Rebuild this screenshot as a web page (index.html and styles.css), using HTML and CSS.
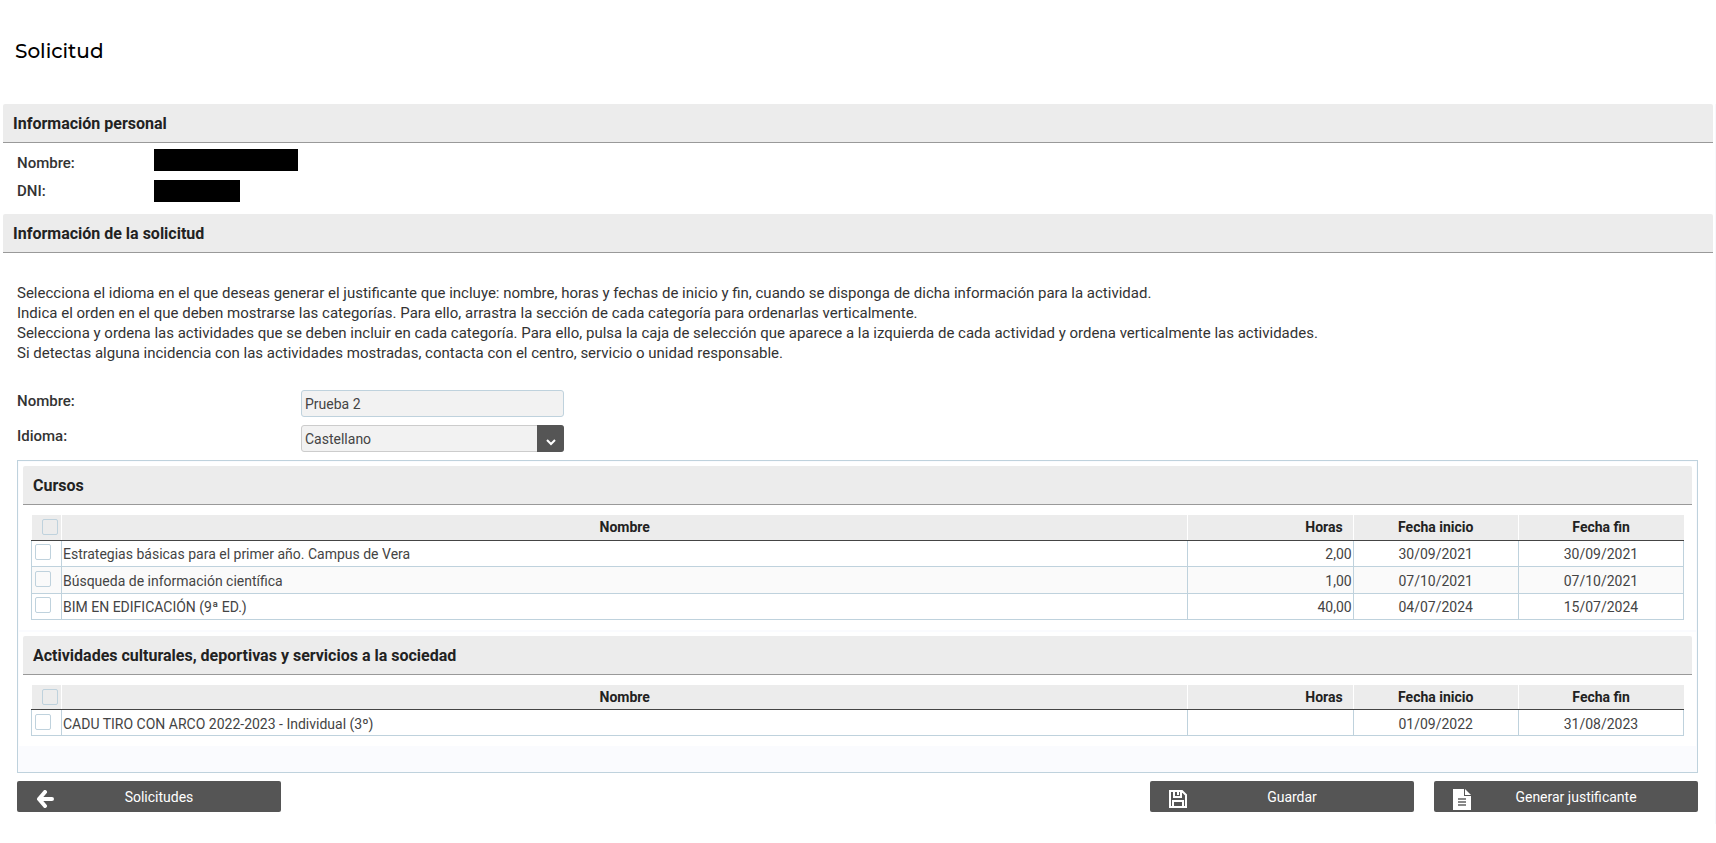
FILE: index.html
```html
<!DOCTYPE html>
<html lang="es">

<head>
  <meta charset="UTF-8">
  <title>Solicitud</title>
  <meta name="viewport" content="width=device-width, initial-scale=1.0">
  <link rel="stylesheet" href="styles.css">
</head>

<body>
  <h1>Solicitud</h1>

  <main class="page">
    <h2 class="section-title">Información personal</h2>
    <dl class="personal">
      <dt>Nombre:</dt>
      <dd><span class="redacted redacted-name"></span></dd>
      <dt>DNI:</dt>
      <dd><span class="redacted redacted-dni"></span></dd>
    </dl>

    <h2 class="section-title">Información de la solicitud</h2>
    <form class="request">
      <p class="help">
        Selecciona el idioma en el que deseas generar el justificante que incluye: nombre, horas y fechas de inicio y fin, cuando se disponga de dicha información para la actividad.<br>
        Indica el orden en el que deben mostrarse las categorías. Para ello, arrastra la sección de cada categoría para ordenarlas verticalmente.<br>
        Selecciona y ordena las actividades que se deben incluir en cada categoría. Para ello, pulsa la caja de selección que aparece a la izquierda de cada actividad y ordena verticalmente las actividades.<br>
        Si detectas alguna incidencia con las actividades mostradas, contacta con el centro, servicio o unidad responsable.
      </p>

      <div class="fields">
        <div class="field">
          <label for="nombre">Nombre:</label>
          <input type="text" id="nombre" value="Prueba 2">
        </div>
        <div class="field">
          <label for="idioma">Idioma:</label>
          <div class="select">
            <select id="idioma">
              <option>Castellano</option>
              <option>Valenciano</option>
              <option>Inglés</option>
            </select>
            <span class="select-arrow">
              <svg width="10" height="7" viewBox="0 0 10 7"><path d="M1 1l4 4 4-4" fill="none" stroke="#fff" stroke-width="2"/></svg>
            </span>
          </div>
        </div>
      </div>

      <!-- Categories -->
      <div class="categories">
        <section class="category">
          <h3 class="section-title">Cursos</h3>
          <table>
            <thead>
              <tr>
                <th class="col-check"><input type="checkbox" aria-label="Seleccionar todos los cursos"></th>
                <th>Nombre</th>
                <th class="col-hours">Horas</th>
                <th class="col-date">Fecha inicio</th>
                <th class="col-date">Fecha fin</th>
              </tr>
            </thead>
            <tbody>
              <tr>
                <td class="col-check"><input type="checkbox" id="curso-1"></td>
                <td><label for="curso-1">Estrategias básicas para el primer año. Campus de Vera</label></td>
                <td class="col-hours">2,00</td>
                <td class="col-date">30/09/2021</td>
                <td class="col-date">30/09/2021</td>
              </tr>
              <tr>
                <td class="col-check"><input type="checkbox" id="curso-2"></td>
                <td><label for="curso-2">Búsqueda de información científica</label></td>
                <td class="col-hours">1,00</td>
                <td class="col-date">07/10/2021</td>
                <td class="col-date">07/10/2021</td>
              </tr>
              <tr>
                <td class="col-check"><input type="checkbox" id="curso-3"></td>
                <td><label for="curso-3">BIM EN EDIFICACIÓN (9ª ED.)</label></td>
                <td class="col-hours">40,00</td>
                <td class="col-date">04/07/2024</td>
                <td class="col-date">15/07/2024</td>
              </tr>
            </tbody>
          </table>
        </section>

        <section class="category">
          <h3 class="section-title">Actividades culturales, deportivas y servicios a la sociedad</h3>
          <table>
            <thead>
              <tr>
                <th class="col-check"><input type="checkbox" aria-label="Seleccionar todas las actividades"></th>
                <th>Nombre</th>
                <th class="col-hours">Horas</th>
                <th class="col-date">Fecha inicio</th>
                <th class="col-date">Fecha fin</th>
              </tr>
            </thead>
            <tbody>
              <tr>
                <td class="col-check"><input type="checkbox" id="actividad-1"></td>
                <td><label for="actividad-1">CADU TIRO CON ARCO 2022-2023 - Individual (3º)</label></td>
                <td class="col-hours"></td>
                <td class="col-date">01/09/2022</td>
                <td class="col-date">31/08/2023</td>
              </tr>
            </tbody>
          </table>
        </section>
      </div>

      <!-- Buttons -->
      <div class="actions">
        <button type="button" class="back">
          <svg width="18" height="18" viewBox="0 0 18 18"><path d="M9 2L3 9l6 7M3 9h13" fill="none" stroke="#fff" stroke-width="4" stroke-linejoin="round" stroke-linecap="round"/></svg>
          <span>Solicitudes</span>
        </button>
        <button type="submit">
          <svg width="18" height="18" viewBox="0 0 18 18" fill="none" stroke="#fff" stroke-width="2"><path d="M1 1h12l4 4v12H1zM4 17v-6h10v6M5 1v6h7V1"/><path d="M9 2v3"/></svg>
          <span>Guardar</span>
        </button>
        <button type="button">
          <svg width="18" height="21" viewBox="0 0 18 21"><path d="M0 0h11v7h7v14H0z" fill="#fff"/><path d="M12 0l6 6h-6z" fill="#fff"/><path d="M5 10h8M5 13h8M5 16h8" stroke="#888" stroke-width="2"/></svg>
          <span>Generar justificante</span>
        </button>
      </div>
    </form>
  </main>
</body>

</html>
```
FILE: styles.css
```css
/* General Styles */
* {
  box-sizing: border-box;
}

body {
  margin: 0;
  background-color: #fff;
  color: #333;
  font-family: Roboto, Arial, sans-serif;
  font-size: 15px;
  line-height: 20px;
}

.page {
  padding: 0 2px 12px 3px;
  border-right: 1px solid #f7f8fc;
}

h1 {
  margin: 0;
  padding: 36px 15px 38px;
  color: #000;
  font-family: Montserrat, Inter, sans-serif;
  font-size: 20px;
  font-weight: 500;
  line-height: 30px;
}

.section-title {
  margin: 0;
  padding: 10px 10px 8px;
  border-bottom: 1px solid #999;
  border-radius: 2px 2px 0 0;
  background-color: #ececec;
  color: #222;
  font-size: 16px;
  font-weight: 700;
  line-height: 20px;
}

/* Personal data */
.personal {
  display: grid;
  grid-template-columns: 137px 1fr;
  grid-auto-rows: 28px;
  align-items: center;
  margin: 0;
  padding: 6px 14px 9px;
}

.personal dt {
  font-weight: 500;
}

.personal dd {
  display: flex;
  align-items: center;
  height: 28px;
  margin: 0;
}

.redacted {
  height: 22px;
  background-color: #000;
}

.redacted-name {
  align-self: flex-start;
  width: 144px;
}

.redacted-dni {
  width: 86px;
}

/* Request form */
.request {
  padding: 30px 15px 0 14px;
}

.help {
  margin: 0 0 27px;
}

.fields {
  display: flex;
  flex-direction: column;
  gap: 8px;
  margin-bottom: 8px;
}

.field {
  display: grid;
  grid-template-columns: 284px 263px;
}

.field label {
  padding-top: 1px;
  font-weight: 500;
}

.field input,
.field select {
  width: 100%;
  height: 27px;
  padding: 0 3px;
  border: 1px solid #bfd2dd;
  border-radius: 3px;
  background-color: #f2f2f2;
  color: #444;
  font-family: inherit;
  font-size: 14px;
}

.field select {
  appearance: none;
  border-color: #ccc;
}

.select {
  position: relative;
}

.select-arrow {
  position: absolute;
  top: 0;
  right: 0;
  display: flex;
  align-items: center;
  justify-content: center;
  width: 27px;
  height: 27px;
  padding-top: 8px;
  border-radius: 0 3px 3px 0;
  background-color: #555;
  pointer-events: none;
}

/* Categories */
.categories {
  display: flex;
  flex-direction: column;
  gap: 2px;
  padding: 1px 1px 26px;
  border: 1px solid #bfd2dd;
  background-color: #fafbfe;
}

.category {
  padding: 4px 4px 10px;
  background-color: #fff;
}

table {
  width: calc(100% - 16px);
  margin: 10px 8px 0;
  border-collapse: collapse;
  table-layout: fixed;
  color: #444;
  font-size: 14px;
}

th {
  height: 25px;
  padding: 0;
  border-right: 1px solid #fff;
  border-bottom: 1px solid #444;
  background-color: #ececec;
  color: #222;
  font-weight: 700;
}

th:last-child {
  border-right: none;
}

td {
  height: 26px;
  padding: 2px 1px 0;
  border: 1px solid #bfd2dd;
}

thead + tbody tr:first-child td {
  border-top-color: #444;
}

tbody tr:nth-child(even) {
  background-color: #fafafa;
}

tbody tr:nth-child(even) td {
  height: 27px;
}

.col-check {
  width: 30px;
  line-height: 0;
  text-align: left;
}

.col-check input {
  appearance: none;
  width: 16px;
  height: 16px;
  margin: 0 0 4px 2px;
  border: 1px solid #bfd2dd;
  border-radius: 2px;
  vertical-align: middle;
}

th.col-check input {
  margin: 0 0 0 10px;
}

.col-hours {
  width: 10%;
  text-align: right;
}

th.col-hours {
  padding-right: 10px;
}

.col-date {
  width: 10%;
  text-align: center;
}

/* Buttons */
.actions {
  display: flex;
  gap: 20px;
  margin-top: 8px;
}

button {
  display: flex;
  align-items: center;
  width: 264px;
  height: 31px;
  padding: 0 17px 0 19px;
  border: none;
  border-radius: 2px;
  background-color: #555;
  color: #fff;
  font-family: inherit;
  font-size: 14px;
  cursor: pointer;
}

button svg {
  flex: none;
  margin-top: 5px;
}

button span {
  flex: 1;
}

button:hover {
  background-color: #333;
}

.back {
  margin-right: auto;
}
```
